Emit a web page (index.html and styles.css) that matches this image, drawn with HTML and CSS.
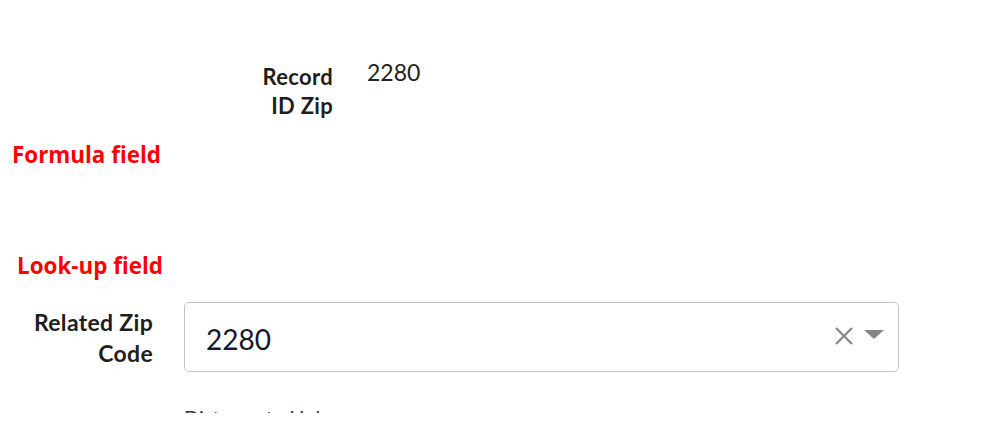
FILE: index.html
```html
<!DOCTYPE html>
<html lang="en">
<head>
  <meta charset="UTF-8" />
  <meta name="viewport" content="width=device-width, initial-scale=1.0"/>
  <title>Record ID Zip</title>
  <link rel="stylesheet" href="styles.css">
</head>
<body>
  <!-- FORMULA FIELD -->
  <div class="field field-record">
    <div class="label">Record ID Zip</div>
    <div class="value">2280</div>
  </div>
  <h2 class="note note-formula">Formula field</h2>

  <!-- LOOK-UP FIELD -->
  <h2 class="note note-lookup">Look-up field</h2>
  <div class="field field-related">
    <div class="label">Related Zip Code</div>
    <div class="lookup">
      <span class="lookup-text">2280</span>
      <span class="lookup-icons">
        <svg class="icon-clear" width="20" height="20" viewBox="0 0 20 20">
          <path d="M2 2 L18 18 M18 2 L2 18" stroke="#8a8a8a" stroke-width="2.4" fill="none"/>
        </svg>
        <svg class="icon-caret" width="20" height="9" viewBox="0 0 20 9">
          <path d="M0 0 L20 0 L10 9 Z" fill="#858585"/>
        </svg>
      </span>
    </div>
  </div>

  <div class="next-field">
    <div class="next-label">Distance to Hub</div>
  </div>
</body>
</html>
```

FILE: styles.css
```css
body {
  margin: 0;
  background: #fff;
  font-family: Lato, "Noto Sans", sans-serif;
  color: #1e1e1e;
}
.field {
  display: grid;
  align-items: start;
}
.label {
  font-weight: bold;
  text-align: right;
  letter-spacing: 0.3px;
}
.field-record {
  grid-template-columns: 84px auto;
  column-gap: 34px;
  margin-left: 249px;
  padding-top: 62px;
}
.field-record .label {
  font-size: 22px;
  line-height: 29px;
}
.field-record .value {
  font-size: 23px;
  line-height: 29px;
  margin-top: -4px;
  color: #222;
}
.note {
  margin: 0;
  color: #ff0000;
  font-family: "Open Sans", sans-serif;
  font-weight: bold;
  font-size: 22.4px;
  line-height: 30px;
}
.note-formula {
  margin-top: 20px;
  margin-left: 12px;
}
.note-lookup {
  margin-top: 81px;
  margin-left: 17px;
}
.field-related {
  grid-template-columns: 126px 715px;
  column-gap: 31px;
  margin-left: 27px;
  margin-top: 21px;
}
.field-related .label {
  font-size: 23px;
  line-height: 31px;
  margin-top: 5px;
}
.lookup {
  height: 70px;
  box-sizing: border-box;
  border: 1px solid #c4c4c4;
  border-radius: 5px;
  display: flex;
  align-items: center;
  justify-content: space-between;
  padding: 3px 14px 0 21px;
}
.lookup-text {
  font-size: 28px;
  color: #17172e;
}
.lookup-icons {
  display: flex;
  align-items: center;
  gap: 10px;
  margin-top: -6px;
}
.icon-caret {
  margin-top: -2px;
}
.next-field {
  margin: 31px 0 0 184px;
  height: 10px;
  overflow: hidden;
}
.next-label {
  font-size: 20px;
  line-height: 29px;
  color: #333;
}
```
